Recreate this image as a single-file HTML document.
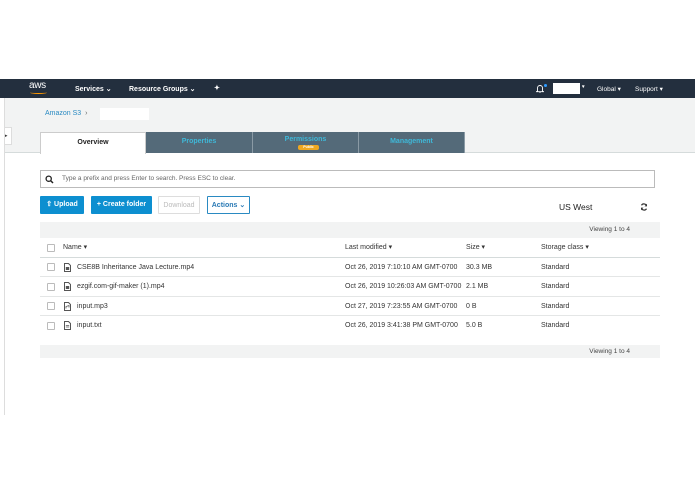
<!DOCTYPE html>
<html><head><style>
*{margin:0;padding:0;box-sizing:border-box}
body{width:695px;height:494px;background:#fff;font-family:"Liberation Sans",sans-serif;position:relative;overflow:hidden;color:#333}
.a{position:absolute}
.nav{left:0;top:79px;width:695px;height:19px;background:#232f3e;color:#fff;font-size:7px;font-weight:bold}
.tab{top:132px;height:21px;background:#546a79;color:#3fb8d8;font-size:7px;font-weight:bold;text-align:center;line-height:20px;border-right:1px solid #8a9aa5}
.btn{top:196px;height:18px;font-size:7px;font-weight:bold;line-height:18px;text-align:center;border-radius:1px}
.row{left:40px;width:620px;height:19.5px;border-bottom:1px solid #e4e6e6;font-size:7px;line-height:19px}
.cb{position:absolute;left:7px;top:5.5px;width:8px;height:8px;border:1px solid #bbb;border-radius:1px;background:#fff}
.fi{position:absolute;left:24px;top:5px}
.row span{position:absolute}
</style></head><body>
<div class="a nav">
 <div class="a" style="left:29px;top:1px;font-size:10px;font-weight:normal;letter-spacing:-0.3px">aws</div>
 <div class="a" style="left:30px;top:12px;width:17px;height:3px;border-bottom:1.5px solid #f90;border-radius:0 0 50% 50%"></div>
 <div class="a" style="left:75px;top:6px">Services ⌄</div>
 <div class="a" style="left:129px;top:6px">Resource Groups ⌄</div>
 <div class="a" style="left:214px;top:5px">✦</div>
 <svg class="a" style="left:536px;top:5px" width="8" height="9" viewBox="0 0 8 9"><path d="M1.5 7V4a2.5 2.5 0 015 0v3l1 .7H.5z M3 8h2" fill="none" stroke="#fff" stroke-width=".9"/></svg>
 <div class="a" style="left:544px;top:5px;width:3px;height:3px;border-radius:50%;background:#2e9bff"></div>
 <div class="a" style="left:553px;top:4px;width:27px;height:11px;background:#fff"></div>
 <div class="a" style="left:582px;top:5px;font-size:5px">▾</div>
 <div class="a" style="left:597px;top:6px;font-weight:normal;font-size:6.5px">Global ▾</div>
 <div class="a" style="left:635px;top:6px;font-weight:normal;font-size:6.5px">Support ▾</div>
</div>
<div class="a" style="left:4px;top:98px;width:1px;height:317px;background:#ddd"></div>
<div class="a" style="left:5px;top:98px;width:690px;height:55px;background:#f2f3f3;border-bottom:1px solid #d5dbdb"></div>
<div class="a" style="left:5px;top:127px;width:7px;height:18px;background:#fff;border:1px solid #ddd;border-left:none;font-size:5px;line-height:16px">▸</div>
<div class="a" style="left:45px;top:110px;font-size:7px;color:#2a8ac2">Amazon S3 &nbsp;<span style="color:#666">›</span></div>
<div class="a" style="left:100px;top:108px;width:49px;height:12px;background:#fff"></div>
<div class="a" style="left:40px;top:132px;width:106px;height:22px;background:#fff;border:1px solid #ccc;border-bottom:none;font-size:7px;font-weight:bold;text-align:center;line-height:20px;color:#222">Overview</div>
<div class="a tab" style="left:146px;width:107px">Properties</div>
<div class="a tab" style="left:253px;width:106px;line-height:16px">Permissions<div class="a" style="left:45px;top:13px;width:21px;height:5px;background:#f0a820;border-radius:2px;font-size:3.5px;line-height:5px;color:#fff">Public</div></div>
<div class="a tab" style="left:359px;width:106px">Management</div>
<div class="a" style="left:40px;top:170px;width:615px;height:18px;border:1px solid #bbb;font-size:6.5px;line-height:16px;color:#666;padding-left:21px">Type a prefix and press Enter to search. Press ESC to clear.</div>
<svg class="a" style="left:45px;top:175px" width="9" height="9" viewBox="0 0 9 9"><circle cx="3.7" cy="3.7" r="2.6" fill="none" stroke="#222" stroke-width="1.3"/><path d="M5.6 5.6L8 8" stroke="#222" stroke-width="1.5"/></svg>
<div class="a btn" style="left:40px;width:44px;background:#0d8fd0;color:#fff">⇧ Upload</div>
<div class="a btn" style="left:91px;width:61px;background:#0d8fd0;color:#fff">+ Create folder</div>
<div class="a btn" style="left:158px;width:42px;border:1px solid #ddd;color:#bbb;font-weight:normal">Download</div>
<div class="a btn" style="left:207px;width:43px;border:1px solid #2a8ac2;color:#2a7ab5">Actions ⌄</div>
<div class="a" style="left:559px;top:202px;font-size:8.5px;color:#222">US West</div>
<svg class="a" style="left:640px;top:203px" width="8" height="8" viewBox="0 0 8 8"><path d="M6.5 3A2.7 2.7 0 001.5 2.3M1.5 5a2.7 2.7 0 005 .7" fill="none" stroke="#333" stroke-width="1.2"/><path d="M7 0.8v2.6H4.5z M1 7.2V4.6h2.5z" fill="#333"/></svg>
<div class="a" style="left:40px;top:222px;width:620px;height:16px;background:#f2f3f3;font-size:6.5px;line-height:16px;text-align:right;padding-right:30px;color:#444">Viewing 1 to 4</div>
<div class="a row" style="top:238px;border-bottom:1px solid #d5dbdb"><div class="cb"></div><span style="left:23px">Name ▾</span><span style="left:305px">Last modified ▾</span><span style="left:426px">Size ▾</span><span style="left:501px">Storage class ▾</span></div>
<div class="a row" style="top:257.5px"><div class="cb"></div><svg class="fi" width="7" height="9" viewBox="0 0 7 9"><path d="M.5.5h4l2 2v6h-6z" fill="#fff" stroke="#555"/><rect x="1.8" y="4" width="3.4" height="3" fill="#555"/></svg><span style="left:37px">CSE8B Inheritance Java Lecture.mp4</span><span style="left:305px">Oct 26, 2019 7:10:10 AM GMT-0700</span><span style="left:426px">30.3 MB</span><span style="left:501px">Standard</span></div>
<div class="a row" style="top:277px"><div class="cb"></div><svg class="fi" width="7" height="9" viewBox="0 0 7 9"><path d="M.5.5h4l2 2v6h-6z" fill="#fff" stroke="#555"/><rect x="1.8" y="4" width="3.4" height="3" fill="#555"/></svg><span style="left:37px">ezgif.com-gif-maker (1).mp4</span><span style="left:305px">Oct 26, 2019 10:26:03 AM GMT-0700</span><span style="left:426px">2.1 MB</span><span style="left:501px">Standard</span></div>
<div class="a row" style="top:296.5px"><div class="cb"></div><svg class="fi" width="7" height="9" viewBox="0 0 7 9"><path d="M.5.5h4l2 2v6h-6z" fill="#fff" stroke="#555"/><path d="M2 6.5v-2l3-1v2" fill="none" stroke="#555" stroke-width=".8"/></svg><span style="left:37px">input.mp3</span><span style="left:305px">Oct 27, 2019 7:23:55 AM GMT-0700</span><span style="left:426px">0 B</span><span style="left:501px">Standard</span></div>
<div class="a row" style="top:316px;border-bottom:none"><div class="cb"></div><svg class="fi" width="7" height="9" viewBox="0 0 7 9"><path d="M.5.5h4l2 2v6h-6z" fill="#fff" stroke="#555"/><path d="M1.8 4.5h3.4M1.8 6h3.4" stroke="#555" stroke-width=".7"/></svg><span style="left:37px">input.txt</span><span style="left:305px">Oct 26, 2019 3:41:38 PM GMT-0700</span><span style="left:426px">5.0 B</span><span style="left:501px">Standard</span></div>
<div class="a" style="left:40px;top:345px;width:620px;height:13px;background:#f2f3f3;font-size:6.5px;line-height:13px;text-align:right;padding-right:30px;color:#444">Viewing 1 to 4</div>
</body></html>
